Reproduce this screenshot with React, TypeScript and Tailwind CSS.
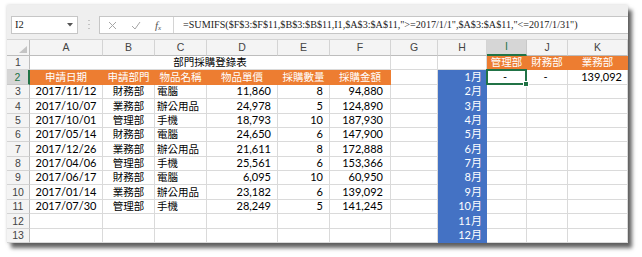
const COLS = ['A', 'B', 'C', 'D', 'E', 'F', 'G', 'H', 'I', 'J', 'K'];

const purchases = [
  ['2017/11/12', '財務部', '電腦', '11,860', '8', '94,880'],
  ['2017/10/07', '業務部', '辦公用品', '24,978', '5', '124,890'],
  ['2017/10/01', '管理部', '手機', '18,793', '10', '187,930'],
  ['2017/05/14', '財務部', '電腦', '24,650', '6', '147,900'],
  ['2017/12/26', '業務部', '辦公用品', '21,611', '8', '172,888'],
  ['2017/04/06', '管理部', '手機', '25,561', '6', '153,366'],
  ['2017/06/17', '財務部', '電腦', '6,095', '10', '60,950'],
  ['2017/01/14', '業務部', '辦公用品', '23,182', '6', '139,092'],
  ['2017/07/30', '管理部', '手機', '28,249', '5', '141,245'],
];

const headers = ['申請日期', '申請部門', '物品名稱', '物品單價', '採購數量', '採購金額'];
const depts = ['管理部', '財務部', '業務部'];

function Cell({ className = '', children }: { className?: string; children?: React.ReactNode }) {
  return (
    <div className={`border-r border-b flex items-end whitespace-nowrap overflow-visible leading-[12px] pb-[1px] ${className}`}>
      {children}
    </div>
  );
}

function RowHead({ n, active }: { n: number; active?: boolean }) {
  return (
    <div
      className={`flex items-end justify-center pb-[1px] leading-[12px] text-[10.5px] border-b ${
        active
          ? 'bg-[#d6d6d6] text-[#217346] border-b-[#c8c8c8] border-r-2 border-r-[#217346]'
          : 'bg-[#f4f4f4] text-[#444] border-b-[#d4d4d4] border-r border-r-[#bdbdbd]'
      } font-['Liberation_Sans',sans-serif]`}
    >
      {n}
    </div>
  );
}

function Month({ m }: { m: number }) {
  return (
    <Cell className="bg-[#4472c4] border-[#4472c4] text-white justify-end pr-[4px]">
      {m}月
    </Cell>
  );
}

function Blank({ className = '' }: { className?: string }) {
  return <Cell className={`bg-white border-[#dadada] ${className}`} />;
}

export default function App() {
  return (
    <div className="w-[642px] h-[257px] bg-white overflow-hidden pt-[5px] pl-[7px]">
      <div className="w-[621px] h-[238px] bg-[#efefef] flex flex-col shadow-[0_0_3px_rgba(0,0,0,0.18),4px_5px_4px_rgba(0,0,0,0.6)]">
        {/* formula bar */}
        <div className="h-[35px] flex items-start pt-[11px] pl-[4px] border-b border-[#d4d4d4]">
          <div className="w-[67px] h-[18px] bg-white border border-[#c6c6c6] flex items-center justify-between pl-[3px] pr-[4px]">
            <span className="font-['Liberation_Serif',serif] text-[10.5px] text-[#222]">I2</span>
            <svg width="6" height="4" viewBox="0 0 6 4">
              <path d="M0 0h6L3 3.5z" fill="#555" />
            </svg>
          </div>
          <div className="w-[21px] flex justify-center pt-[4px]">
            <svg width="2" height="9" viewBox="0 0 2 9">
              <rect x="0.5" y="0" width="1" height="1" fill="#999" />
              <rect x="0.5" y="4" width="1" height="1" fill="#999" />
              <rect x="0.5" y="8" width="1" height="1" fill="#999" />
            </svg>
          </div>
          <div className="flex-1 h-[18px] bg-white border border-[#c6c6c6] border-r-0 flex items-center">
            <div className="w-[74px] h-full flex items-center pl-[8px] gap-[14px] border-r border-[#d4d4d4]">
              <svg width="9" height="9" viewBox="0 0 9 9">
                <path d="M1 1l7 7M8 1l-7 7" stroke="#a6a6a6" strokeWidth="1" />
              </svg>
              <svg width="10" height="9" viewBox="0 0 10 9">
                <path d="M1 5l3 3 5-7" stroke="#a6a6a6" strokeWidth="1" fill="none" />
              </svg>
              <span className="font-['Liberation_Serif',serif] italic text-[11px] text-[#555] leading-none">
                f<span className="text-[7px] relative top-[1px]">x</span>
              </span>
            </div>
            <span className="pl-[9px] font-['Liberation_Serif',serif] text-[10.15px] text-[#222] whitespace-nowrap">
              =SUMIFS($F$3:$F$11,$B$3:$B$11,I1,$A$3:$A$11,"&gt;=2017/1/1",$A$3:$A$11,"&lt;=2017/1/31")
            </span>
          </div>
        </div>

        {/* sheet */}
        <div className="grid grid-cols-[23px_73px_52px_52px_71px_52px_61px_47px_49px_40px_41px_60px] grid-rows-[16px_repeat(13,minmax(0,1fr))] h-[203px] bg-white font-['Lato','Noto_Sans_CJK_TC',sans-serif] text-[11px] text-black">
          {/* column headers */}
          <div className="bg-[#f4f4f4] border-r border-b border-[#bdbdbd] flex items-end justify-end p-[2px]">
            <svg width="8" height="7" viewBox="0 0 8 7">
              <path d="M8 0V7H0z" fill="#c4c4c4" />
            </svg>
          </div>
          {COLS.map((c) => (
            <div
              key={c}
              className={`flex items-center justify-center text-[10.5px] font-['Liberation_Sans',sans-serif] border-r ${
                c === 'I'
                  ? 'bg-[#d6d6d6] text-[#217346] border-r-[#c8c8c8] border-b-2 border-b-[#217346]'
                  : 'bg-[#f4f4f4] text-[#444] border-r-[#d4d4d4] border-b border-b-[#bdbdbd]'
              }`}
            >
              {c}
            </div>
          ))}

          {/* row 1 */}
          <RowHead n={1} />
          <Cell className="col-span-6 justify-center border-[#dadada] text-[10.5px]">部門採購登錄表</Cell>
          <Blank />
          <Blank />
          {depts.map((d) => (
            <Cell key={d} className="bg-[#ed7d31] border-[#ed7d31] text-white justify-center text-[10.5px]">
              {d}
            </Cell>
          ))}

          {/* row 2 */}
          <RowHead n={2} active />
          {headers.map((h) => (
            <Cell key={h} className="bg-[#ed7d31] border-[#ed7d31] text-white justify-center text-[10.5px]">
              {h}
            </Cell>
          ))}
          <Blank />
          <Month m={1} />
          <Cell className="relative border-[#dadada] justify-center pr-[3px]">
            -
            <div className="absolute -left-px -top-px -right-px -bottom-px border-2 border-[#217346]" />
            <div className="absolute -right-[3px] -bottom-[3px] w-[6px] h-[6px] bg-[#217346] border border-white" />
          </Cell>
          <Cell className="border-[#dadada] justify-center pr-[3px]">-</Cell>
          <Cell className="border-[#dadada] justify-end pr-[5px]">139,092</Cell>

          {/* data rows */}
          {purchases.map((r, i) => (
            <div key={r[0]} className="contents">
              <RowHead n={i + 3} />
              <Cell className="border-[#dadada] justify-center">{r[0]}</Cell>
              <Cell className="border-[#dadada] justify-center text-[10.5px]">{r[1]}</Cell>
              <Cell className="border-[#dadada] justify-start pl-[2px] text-[10.5px]">{r[2]}</Cell>
              <Cell className="border-[#dadada] justify-end pr-[6px]">{r[3]}</Cell>
              <Cell className="border-[#dadada] justify-end pr-[6px]">{r[4]}</Cell>
              <Cell className="border-[#dadada] justify-end pr-[7px]">{r[5]}</Cell>
              <Blank />
              <Month m={i + 2} />
              <Blank />
              <Blank />
              <Blank />
            </div>
          ))}

          {/* empty rows */}
          {[12, 13].map((n) => (
            <div key={n} className="contents">
              <RowHead n={n} />
              <Blank />
              <Blank />
              <Blank />
              <Blank />
              <Blank />
              <Blank />
              <Blank />
              <Month m={n - 1} />
              <Blank />
              <Blank />
              <Blank />
            </div>
          ))}
        </div>
      </div>
    </div>
  );
}
